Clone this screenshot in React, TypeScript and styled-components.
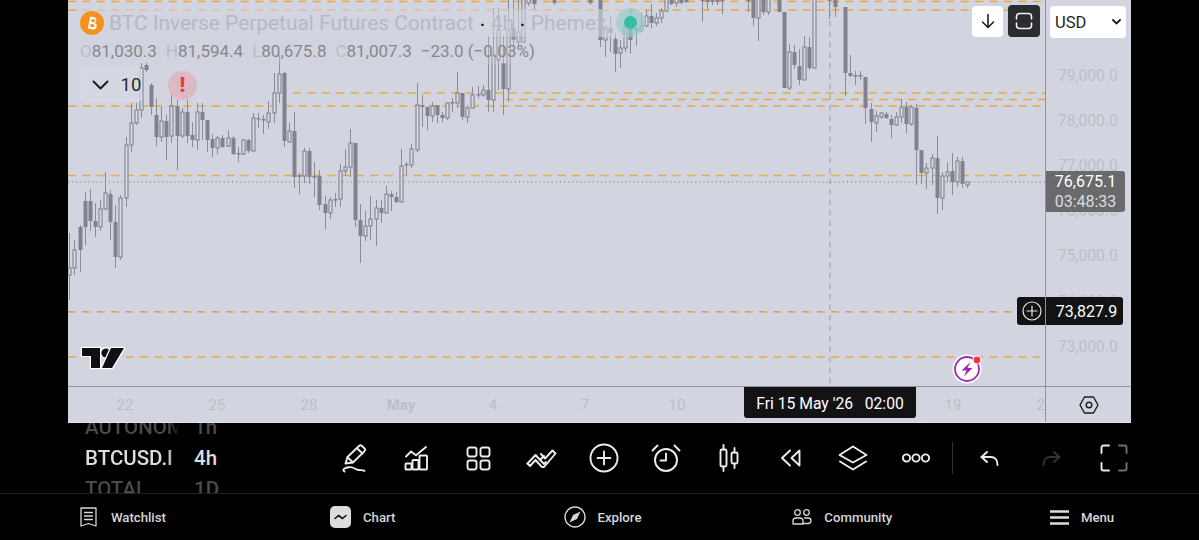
import React from 'react';
import styled, { createGlobalStyle } from 'styled-components';

const Global = createGlobalStyle`
  html, body { margin: 0; padding: 0; background: #000; }
  body { font-family: Roboto, "Liberation Sans", sans-serif; overflow: hidden; }
`;

const Page = styled.div`
  width: 1199px; height: 540px; background: #000; display: flex; flex-direction: column; overflow: hidden;
`;
const Stage = styled.div`
  height: 423px; padding: 0 68px; display: flex; flex-direction: column; box-sizing: border-box; flex: none;
`;
const ChartRow = styled.div`
  height: 387px; display: flex; border-bottom: 1.5px solid #8f929b; box-sizing: border-box; background: #d2d5df; flex: none;
`;
const ChartPane = styled.div`
  position: relative; flex: 1; overflow: visible; min-width: 0;
`;
const ChartSvg = styled.svg`
  position: absolute; inset: 0; display: block;
`;
const Legend = styled.div`
  position: absolute; left: 12px; top: 9px; display: flex; flex-direction: column; align-items: flex-start;
`;
const TitleRow = styled.div`
  height: 28px; width: 565px; display: flex; align-items: center; gap: 5px;
  background: rgba(210,213,223,.6); font-size: 20.9px; color: #b6b9c4; white-space: nowrap;
`;
const CoinBadge = styled.svg`
  width: 24px; height: 24px; flex: none;
`;
const TitleDot = styled.span`
  color: #111; margin: 0 6px; font-weight: 700; font-size: 16px;
`;
const OhlcRow = styled.div`
  margin-top: 1px; height: 26px; display: flex; align-items: center; gap: 9px; font-size: 17px;
  color: #85888f; background: rgba(210,213,223,.3); white-space: nowrap;
`;
const OhlcItem = styled.span``;
const OhlcKey = styled.span`
  color: #b9bcc6; margin-right: 0;
`;
const Collapse = styled.div`
  position: absolute; left: 12px; top: 68px; width: 62px; height: 33px; box-sizing: border-box;
  border: 1px solid #dadde5; border-radius: 3px; background: rgba(214,217,227,.72);
  display: flex; align-items: center; gap: 11.5px; padding-left: 11px; font-size: 18.5px; color: #2a2b30;
`;
const ChevronSvg = styled.svg`
  width: 17px; height: 10px; flex: none;
`;
const AlertBubble = styled.div`
  position: absolute; left: 100px; top: 71px; width: 29px; height: 29px; border-radius: 50%;
  background: #dcb9c3; color: #f23645; display: flex; align-items: center; justify-content: center;
  font-size: 21px; font-weight: 900; line-height: 1;
`;
const LiveDot = styled.div`
  position: absolute; left: 548px; top: 8px; width: 29px; height: 29px; border-radius: 50%;
  background: rgba(54,190,165,.25); display: flex; align-items: center; justify-content: center;
  &::after { content: ""; width: 13px; height: 13px; border-radius: 50%; background: #35bea3; }
`;
const ChartButtons = styled.div`
  position: absolute; right: 5px; top: 5px; display: flex; gap: 5px; align-items: center;
`;
const SquareButton = styled.div<{ $dark?: boolean }>`
  width: ${p => (p.$dark ? 32 : 31)}px; height: ${p => (p.$dark ? 32 : 31)}px; border-radius: 4px;
  background: ${p => (p.$dark ? '#2b2c30' : '#fff')}; color: ${p => (p.$dark ? '#f0f0f0' : '#1d1d20')};
  display: flex; align-items: center; justify-content: center;
`;
const Logo = styled.svg`
  position: absolute; left: 12px; top: 344px; width: 46px; height: 28px; overflow: visible;
`;
const Bolt = styled.svg`
  position: absolute; left: 884px; top: 354px; width: 32px; height: 32px; overflow: visible;
`;
const AddLevel = styled.div`
  position: absolute; right: -1px; top: 297px; width: 29px; height: 28px; background: #131316;
  border-radius: 3px 0 0 3px; display: flex; align-items: center; justify-content: center;
`;
const PriceAxis = styled.div`
  position: relative; width: 86px; flex: none; border-left: 1px solid #8f929b; box-sizing: border-box;
  padding: 6px 0 0 4px; display: flex; flex-direction: column;
`;
const CurrencySelect = styled.div`
  width: 76px; height: 32px; border-radius: 4px; background: #fff; box-sizing: border-box; padding: 0 5px;
  display: flex; align-items: center; justify-content: space-between; font-size: 16.5px; color: #1f1f22; flex: none;
  margin-bottom: 15px;
`;
const PriceTick = styled.div`
  height: 45.2px; display: flex; align-items: center; padding-left: 8px; font-size: 15.6px; color: #bcbfc9; flex: none;
`;
const PriceTag = styled.div`
  position: absolute; left: 0; top: 171px; width: 79px; height: 41px; background: #696a6d; border-radius: 0 3px 3px 0;
  display: flex; flex-direction: column; align-items: center; justify-content: center;
  font-size: 16px; line-height: 20px; color: #fff;
`;
const PriceTagSub = styled.span`
  color: #dcdcdc;
`;
const CrossTag = styled.div`
  position: absolute; left: 0; top: 297px; width: 77px; height: 28px; padding-left: 4px; box-sizing: border-box;
  background: #131316; border-radius: 0 3px 3px 0;
  display: flex; align-items: center; justify-content: center; font-size: 16px; color: #fff;
`;
const TimeRow = styled.div`
  height: 36px; display: flex; background: #d2d5df; border-bottom: 1px solid #e2e3e8; box-sizing: border-box; flex: none;
`;
const TimeAxis = styled.div`
  position: relative; flex: 1; min-width: 0; overflow: hidden; display: flex; padding-left: 11px; box-sizing: border-box;
`;
const TimeTick = styled.div<{ $bold?: boolean }>`
  width: 92px; flex: none; text-align: center; line-height: 37px; font-size: 15px; color: #bcbfc9;
  font-weight: ${p => (p.$bold ? 700 : 400)};
`;
const DateTag = styled.div`
  position: absolute; left: 676px; top: 0; width: 172px; height: 31px; background: #131316; border-radius: 0 0 3px 3px;
  padding-top: 2px; box-sizing: border-box;
  color: #fff; font-size: 15.7px; display: flex; align-items: center; justify-content: center; white-space: pre;
`;
const AxisCorner = styled.div`
  width: 86px; flex: none; border-left: 1px solid #8f929b; box-sizing: border-box; display: flex;
  align-items: center; justify-content: center; color: #1c1c20;
`;
const Toolbar = styled.div`
  height: 70px; flex: none; display: flex; align-items: center; padding-left: 85px; box-sizing: border-box;
`;
const Wheel = styled.div`
  width: 238px; height: 70px; flex: none; overflow: hidden; display: flex; flex-direction: column; justify-content: center;
`;
const WheelRow = styled.div<{ $active?: boolean }>`
  height: 31px; flex: none; display: flex; align-items: center; font-size: 20.5px; font-weight: 500;
  color: ${p => (p.$active ? '#dcdcdc' : '#4a4a4a')};
`;
const WheelName = styled.span`
  width: 109px; flex: none; overflow: hidden; white-space: nowrap;
  -webkit-mask-image: linear-gradient(to right, #000 76%, transparent 88%);
  mask-image: linear-gradient(to right, #000 76%, transparent 88%);
`;
const Tool = styled.div<{ $dim?: boolean }>`
  width: 62.4px; height: 40px; flex: none; display: flex; align-items: center; justify-content: center;
  color: ${p => (p.$dim ? '#333' : '#ececec')};
`;
const ToolDivider = styled.div`
  width: 1px; height: 32px; background: #333; margin: 0 5px; flex: none;
`;
const BottomNav = styled.div`
  height: 47px; flex: none; border-top: 1.5px solid #232323; box-sizing: border-box; padding-left: 3px;
  display: grid; grid-template-columns: repeat(5, 239.8px); align-items: center;
`;
const NavItem = styled.div<{ $gap?: number }>`
  display: flex; align-items: center; justify-content: center; gap: ${p => p.$gap ?? 12}px; color: #d6d6d6;
  font-size: 13.2px; font-weight: 500; height: 100%;
`;

type Candle = [number, number, number, number, number, number];
const candles: Candle[] = [
  [69,233,300,268,275,0],[74,240,275,250,268,0],[80,225,272,227,250,1],[85,192,245,201,227,1],[90,189,231,201,221,1],
  [95,203,237,221,227,1],[100,200,231,209,227,0],[105,172,210,193,209,0],[110,190,240,194,222,1],[115,205,268,222,257,1],
  [120,195,260,198,257,0],[126,137,207,145,198,0],[131,103,152,123,145,0],[136,103,125,110,123,0],[141,63,118,68,110,0],
  [146,62,72,65,70,1],[151,83,115,85,107,1],[156,98,146,115,137,1],[161,107,142,121,137,0],[166,115,160,121,137,1],
  [171,90,143,106,136,0],[177,100,170,106,136,1],[182,108,138,112,136,0],[187,100,143,112,136,1],[192,122,147,135,140,1],
  [197,103,150,112,140,0],[202,103,140,112,120,1],[207,120,152,120,140,1],[212,134,157,139,148,1],[217,136,154,138,148,0],
  [222,135,148,138,147,1],[228,130,147,138,146,0],[233,136,155,138,154,1],[238,147,162,153,154,1],[243,139,155,140,154,0],
  [248,139,153,140,151,1],[253,113,151,118,151,0],[258,113,128,118,119,1],[263,115,134,119,120,1],[268,101,129,113,122,0],
  [274,73,123,93,113,0],[279,55,103,74,93,0],[284,72,147,73,141,1],[289,123,143,131,142,0],[294,112,188,131,177,1],
  [299,173,194,175,177,1],[304,148,183,151,176,0],[309,148,184,151,177,1],[314,162,197,176,177,1],[319,170,210,176,205,1],
  [325,196,229,204,213,1],[330,197,219,200,213,0],[335,193,207,199,200,1],[340,164,207,171,199,0],[345,149,176,167,171,0],
  [350,129,177,143,167,0],[355,143,227,143,220,1],[360,204,263,220,236,1],[365,211,241,226,236,0],[370,196,240,219,226,0],
  [376,200,246,208,219,0],[381,200,223,208,213,1],[386,186,213,194,213,0],[391,191,211,194,197,1],[396,192,203,197,202,1],
  [401,149,202,166,202,0],[406,162,176,164,165,1],[411,144,168,149,165,0],[417,83,152,105,150,0],[422,95,127,105,107,1],
  [427,107,130,107,116,1],[432,102,122,106,116,0],[437,105,123,105,115,1],[442,112,122,115,118,1],[447,103,120,103,118,0],
  [452,98,112,102,103,1],[457,72,108,93,103,0],[462,93,120,93,117,1],[467,105,123,108,117,0],[472,87,108,95,108,0],
  [478,86,98,94,95,1],[483,85,97,90,95,0],[488,37,112,90,100,1],[493,8,112,55,100,0],[498,8,90,30,60,0],
  [503,35,115,63,89,1],[508,0,102,30,89,0],[513,0,45,28,40,1],[518,0,46,32,42,0],[523,0,42,-2,42,0],[528,0,6,-2,3,0],[534,0,10,-2,4,1],[554,0,5,-2,3,1],
  [590,0,5,-2,3,1],[600,0,47,-2,40,1],[605,25,57,28,40,0],[610,16,52,28,33,1],[615,33,72,39,54,1],[620,40,68,48,53,0],
  [625,25,52,27,48,0],[630,10,54,20,40,1],[636,27,46,28,31,1],[641,13,32,26,31,0],[646,10,27,16,26,0],[651,4,28,16,23,1],
  [656,13,26,18,23,0],[661,8,23,11,18,0],[666,0,12,-2,11,0],[671,0,5,-2,4,1],[676,0,7,-2,3,0],[681,0,4,-2,3,1],[686,0,3,-2,2,1],
  [702,0,22,-2,1,1],[707,0,10,-2,2,1],[712,0,5,-2,2,1],[717,0,5,-2,2,1],[722,0,14,-2,1,1],[748,0,12,-2,1,1],
  [753,0,26,-2,18,1],[758,0,41,-2,18,0],[763,0,15,-2,12,1],[768,0,15,-2,12,0],[779,0,12,-2,12,1],[784,12,88,12,88,1],
  [789,44,90,52,88,0],[794,45,69,52,65,1],[799,49,85,66,80,1],[804,36,80,47,80,0],[809,37,70,47,68,1],[814,0,68,-2,68,0],
  [829,0,19,-2,1,1],[835,0,17,-2,7,1],[845,7,96,7,73,1],[850,55,77,73,76,1],[855,71,85,75,76,1],[860,71,80,75,76,1],
  [865,77,124,77,108,1],[871,103,142,109,122,1],[876,111,132,116,123,0],[881,112,119,113,117,0],[886,112,119,114,118,1],
  [891,115,138,119,125,1],[896,112,126,117,125,0],[901,99,123,107,117,0],[906,102,133,107,124,1],[911,105,126,107,124,0],
  [916,104,185,108,150,1],[921,150,184,150,173,1],[926,163,189,168,173,0],[932,154,185,158,168,0],[937,136,214,158,198,1],
  [942,172,210,176,198,0],[947,162,182,172,176,0],[952,153,195,171,182,1],[957,157,187,161,182,0],[962,157,188,161,184,1],[967,182,188,182,185,0],
];

const levels: [number, number, number][] = [
  [68, 1045, 1.5], [68, 1045, 10], [293, 1045, 93], [505, 1045, 99.5], [68, 1045, 106], [68, 1045, 175.5], [68, 1017, 312], [68, 1040, 357],
];

const Chart = () => (
  <ChartSvg width="977" height="385" viewBox="68 0 977 385">
    {levels.map(([a, b, y]) => (
      <line key={y} x1={a} x2={b} y1={y} y2={y} stroke="#e9a845" strokeWidth="1.4" strokeDasharray="8 6.4" />
    ))}
    <line x1="68" x2="1017" y1="311.5" y2="311.5" stroke="#a5a9b6" strokeWidth="1" strokeDasharray="5 9.4" />
    <line x1="68" x2="1045" y1="182" y2="182" stroke="#74777f" strokeWidth="1" strokeDasharray="1 3.1" />
    <line x1="830" x2="830" y1="0" y2="385" stroke="#9a9da6" strokeWidth="1" strokeDasharray="5.5 5" />
    {candles.map(([x, wt, wb, bt, bb, f]) => (
      <g key={x}>
        <line x1={x + 0.5} x2={x + 0.5} y1={wt} y2={wb} stroke="#8a8d96" strokeWidth="1" />
        {f ? (
          <rect x={x - 1.5} y={bt} width="4" height={Math.max(bb - bt, 1.5)} fill="#80838d" />
        ) : (
          <rect x={x - 1} y={bt} width="3" height={Math.max(bb - bt, 1.5)} fill="#d9dce5" stroke="#80838d" strokeWidth="1.1" />
        )}
      </g>
    ))}
  </ChartSvg>
);

const TvLogo = () => (
  <Logo viewBox="0 0 46 28">
    <g fill="#101014" stroke="#fff" strokeWidth="2.6" paintOrder="stroke" strokeLinejoin="round">
      <path d="M20 24H11V12H2V4h18z" />
      <circle cx="26" cy="9" r="4.6" />
      <path d="M32 24h-10l9-20h13z" />
    </g>
  </Logo>
);

const BoltBadge = () => (
  <Bolt viewBox="0 0 32 32">
    <circle cx="15" cy="15" r="14.5" fill="#fff" />
    <circle cx="15" cy="15" r="12" fill="none" stroke="#9c2bb0" strokeWidth="1.8" />
    <path d="M18.5 8 9.5 16.5h5L12 22.5l8.5-8.5h-5z" fill="#9c2bb0" />
    <circle cx="25" cy="6" r="4.5" fill="#fff" />
    <circle cx="25" cy="6" r="3.4" fill="#f0353f" />
  </Bolt>
);

const Ico = styled.svg`
  display: block; flex: none; fill: none; stroke: currentColor; stroke-width: 1.9; stroke-linecap: round; stroke-linejoin: round;
`;

const icons: { w: number; h: number; body: React.ReactNode }[] = [
  { w: 26, h: 29, body: (<>
    <path d="M4.5 19.5 6.5 13 18 2a2.2 2.2 0 0 1 3 0l2.3 2.2a2.2 2.2 0 0 1 0 3.1L12 18.5z" />
    <path d="m16 4.2 5.5 5.3M6.5 13.2l5.3 5" />
    <path d="M3.5 27.5c-3-1.8.8-4 4.500-4.300 4.500-.4 6.500 2.300 9.500 2.800 2 .3 4-.3 6 .8" />
  </>) },
  { w: 25, h: 25, body: (<>
    <path d="M2 10.500 7 5.500l5 3.700L22 1" />
    <rect x="1.500" y="17.500" width="6" height="6" rx=".8" />
    <rect x="8.500" y="14" width="6" height="9.500" rx=".8" />
    <rect x="15.500" y="9.500" width="7.500" height="14" rx=".8" />
  </>) },
  { w: 25, h: 25, body: (<>
    <rect x="1.500" y="1.500" width="9" height="9" rx="2.200" />
    <rect x="14.500" y="1.500" width="9" height="9" rx="2.200" />
    <rect x="1.500" y="14.500" width="9" height="9" rx="2.200" />
    <rect x="14.500" y="14.500" width="9" height="9" rx="2.200" />
  </>) },
  { w: 31, h: 20, body: (<>
    <path d="M1.500 15.500 9.500 7l8.500 9 2-2" />
    <path d="M1.500 15.500l2.500 2.500 5.500-6 6 6.500c1 .8 2 .8 3 0L29.500 5.500l-3-3-7.500 8-4-4.500" />
    <path d="M14 12l4-4" />
  </>) },
  { w: 30, h: 30, body: (<>
    <circle cx="15" cy="15" r="13.500" />
    <path d="M15 8.500v13M8.500 15h13" />
  </>) },
  { w: 30, h: 28, body: (<>
    <circle cx="15" cy="16" r="11" />
    <path d="M15 9.500V16.500H9.500" />
    <path d="M1.500 6.500 6.500 1.500M28.500 6.500l-5-5" />
  </>) },
  { w: 20, h: 28, body: (<>
    <rect x="1.500" y="5.500" width="6" height="17" rx="1.500" />
    <path d="M4.500 1v4.500M4.500 22.500V27" />
    <rect x="12.500" y="8.500" width="6" height="11" rx="1.500" />
    <path d="M15.500 4v4.500M15.500 19.500V24" />
  </>) },
  { w: 21, h: 18, body: (<>
    <path d="M10 1.500 2 9l8 7.500" />
    <path d="M19.500 1.500 11.500 9l8 7.500z" />
  </>) },
  { w: 30, h: 26, body: (<>
    <path d="M15 1.500 28.500 10 15 17.500 1.500 10z" />
    <path d="M2 16.500 15 24.500 28 16.500" />
  </>) },
  { w: 28, h: 10, body: (<>
    <circle cx="4.500" cy="5" r="3.600" />
    <circle cx="14" cy="5" r="3.600" />
    <circle cx="23.500" cy="5" r="3.600" />
  </>) },
];

const Undo = ({ flip }: { flip?: boolean }) => (
  <Ico width="19" height="15" viewBox="0 0 19 15" style={flip ? { transform: 'scaleX(-1)' } : undefined}>
    <path d="M7 1 1.500 6 7 11" />
    <path d="M1.500 6H11c3.500 0 6.500 2.500 6.500 8" />
  </Ico>
);

const FullscreenIcon = () => (
  <Ico width="28" height="28" viewBox="0 0 28 28">
    <path d="M9 1.500H3.500a2 2 0 0 0-2 2V9M1.500 19v5.500a2 2 0 0 0 2 2H9" />
    <path d="M19 1.500h5.500a2 2 0 0 1 2 2V9M26.500 19v5.500a2 2 0 0 1-2 2H19" stroke="#6f6f6f" />
  </Ico>
);

const App = () => (
  <Page>
    <Global />
    <Stage>
      <ChartRow>
        <ChartPane>
          <Chart />
          <Legend>
            <TitleRow>
              <CoinBadge viewBox="0 0 24 24">
                <circle cx="12" cy="12" r="12" fill="#f5921f" />
                <path d="M9 6h4a3 3 0 0 1 1.500 5.500A3.200 3.200 0 0 1 13.500 18H9zM11 8v3h2a1.500 1.500 0 0 0 0-3zM11 13v3h2.500a1.500 1.500 0 0 0 0-3z" fill="#fff" transform="rotate(12 12 12)" />
              </CoinBadge>
              <span>BTC Inverse Perpetual Futures Contract<TitleDot>·</TitleDot>4h<TitleDot>·</TitleDot>Phemex</span>
            </TitleRow>
            <OhlcRow>
              <OhlcItem><OhlcKey>O</OhlcKey>81,030.3</OhlcItem>
              <OhlcItem><OhlcKey>H</OhlcKey>81,594.4</OhlcItem>
              <OhlcItem><OhlcKey>L</OhlcKey>80,675.8</OhlcItem>
              <OhlcItem><OhlcKey>C</OhlcKey>81,007.3</OhlcItem>
              <OhlcItem>−23.0 (−0.03%)</OhlcItem>
            </OhlcRow>
          </Legend>
          <Collapse>
            <ChevronSvg viewBox="0 0 17 10"><path d="M1.500 1.500 8.500 8.500l7-7" fill="none" stroke="#1d1d20" strokeWidth="2" strokeLinecap="round" strokeLinejoin="round" /></ChevronSvg>
            10
          </Collapse>
          <AlertBubble>!</AlertBubble>
          <LiveDot />
          <ChartButtons>
            <SquareButton>
              <Ico width="14" height="16" viewBox="0 0 14 16" style={{ strokeWidth: 1.6 }}><path d="M7 1.500v13M1.500 9 7 14.500 12.500 9" /></Ico>
            </SquareButton>
            <SquareButton $dark>
              <Ico width="18" height="18" viewBox="0 0 18 18" style={{ strokeWidth: 1.6 }}>
                <path d="M1.500 7V4.500a3 3 0 0 1 3-3h9a3 3 0 0 1 3 3V7M1.500 11v2.500a3 3 0 0 0 3 3h9a3 3 0 0 0 3-3V11" />
              </Ico>
            </SquareButton>
          </ChartButtons>
          <TvLogo />
          <BoltBadge />
          <AddLevel>
            <Ico width="20" height="20" viewBox="0 0 20 20" style={{ color: '#e6e6e6', strokeWidth: 1.2 }}>
              <circle cx="10" cy="10" r="9" /><path d="M10 5v10M5 10h10" />
            </Ico>
          </AddLevel>
        </ChartPane>
        <PriceAxis>
          <CurrencySelect>
            USD
            <Ico width="9" height="6" viewBox="0 0 9 6" style={{ strokeWidth: 1.8 }}><path d="M1 1l3.500 3.500L8 1" /></Ico>
          </CurrencySelect>
          {['79,000.0', '78,000.0', '77,000.0', '76,000.0', '75,000.0', '74,000.0', '73,000.0'].map(t => (
            <PriceTick key={t}>{t}</PriceTick>
          ))}
          <PriceTag>76,675.1<PriceTagSub>03:48:33</PriceTagSub></PriceTag>
          <CrossTag>73,827.9</CrossTag>
        </PriceAxis>
      </ChartRow>
      <TimeRow>
        <TimeAxis>
          {['22', '25', '28', 'May', '4', '7', '10', '', '', '19', '22'].map((t, i) => (
            <TimeTick key={i} $bold={t === 'May'}>{t}</TimeTick>
          ))}
          <DateTag>{"Fri 15 May '26   02:00"}</DateTag>
        </TimeAxis>
        <AxisCorner>
          <Ico width="20" height="18" viewBox="0 0 20 18" style={{ strokeWidth: 1.4 }}>
            <path d="M5.500 1h9L19 9l-4.500 8h-9L1 9z" /><circle cx="10" cy="9" r="2.800" />
          </Ico>
        </AxisCorner>
      </TimeRow>
    </Stage>
    <Toolbar>
      <Wheel>
        <WheelRow><WheelName>AUTONOMY</WheelName>1h</WheelRow>
        <WheelRow $active><WheelName>BTCUSD.I</WheelName>4h</WheelRow>
        <WheelRow><WheelName>TOTAL</WheelName>1D</WheelRow>
      </Wheel>
      {icons.map((ic, i) => (
        <Tool key={i}>
          <Ico width={ic.w} height={ic.h} viewBox={`0 0 ${ic.w} ${ic.h}`}>{ic.body}</Ico>
        </Tool>
      ))}
      <ToolDivider />
      <Tool><Undo /></Tool>
      <Tool $dim><Undo flip /></Tool>
      <Tool><FullscreenIcon /></Tool>
    </Toolbar>
    <BottomNav>
      <NavItem $gap={14}>
        <Ico width="17" height="20" viewBox="0 0 17 20" style={{ strokeWidth: 1.3 }}>
          <path d="M1 1h15v18l-7.500-2.500L1 19z" /><path d="M4.500 5.500h8M4.500 9h8M4.500 12.500h8" />
        </Ico>
        Watchlist
      </NavItem>
      <NavItem>
        <svg width="21" height="22" viewBox="0 0 21 22">
          <rect width="21" height="22" rx="5" fill="#dcdcdc" />
          <path d="M5 12.500 8.500 9.500l4 3 3.500-3" fill="none" stroke="#111" strokeWidth="1.6" strokeLinecap="round" strokeLinejoin="round" />
        </svg>
        Chart
      </NavItem>
      <NavItem>
        <svg width="22" height="22" viewBox="0 0 22 22">
          <circle cx="11" cy="11" r="10" fill="none" stroke="#d6d6d6" strokeWidth="1.4" />
          <path d="M16.500 5.500 13 13l-7.500 3.500L9 9z" fill="#d6d6d6" />
        </svg>
        Explore
      </NavItem>
      <NavItem>
        <Ico width="20" height="16" viewBox="0 0 20 16" style={{ strokeWidth: 1.3 }}>
          <circle cx="5.500" cy="3.500" r="2.800" /><circle cx="14.500" cy="3.500" r="2.800" />
          <path d="M1 15v-3c0-1.500 1-3 3-3h4c2 0 3 1.500 3 3v3z" />
          <path d="M12.500 9h3.500c2 0 3 1.200 3 2.500 0 2-1 3-3 3h-5" />
        </Ico>
        Community
      </NavItem>
      <NavItem>
        <svg width="19" height="15" viewBox="0 0 19 15">
          <path d="M0 1.500h19M0 7.500h19M0 13.500h19" stroke="#dcdcdc" strokeWidth="2.6" />
        </svg>
        Menu
      </NavItem>
    </BottomNav>
  </Page>
);

export default App;
